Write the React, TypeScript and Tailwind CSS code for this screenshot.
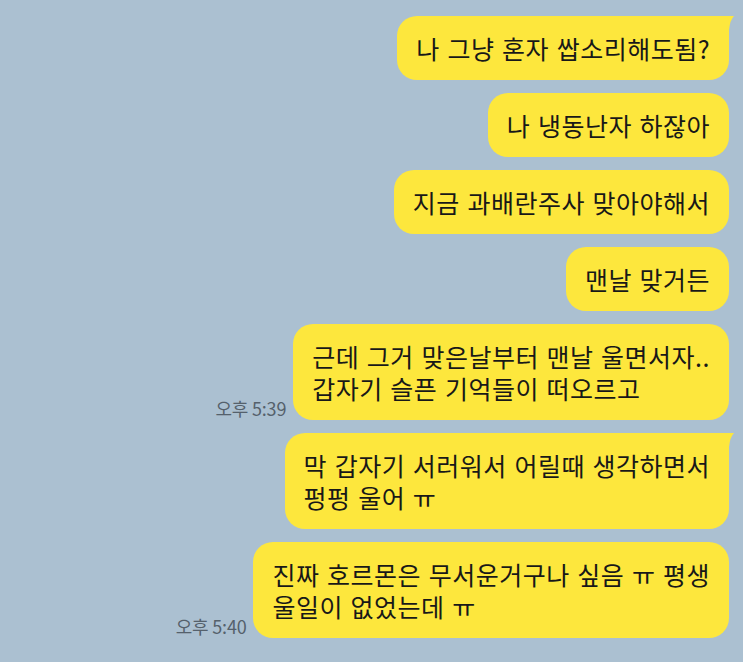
import React from "react";

const FONT = '"Noto Sans CJK KR", "Noto Sans", sans-serif';

function Tail() {
  return (
    <svg
      className="absolute right-[-5px] top-0"
      width="16"
      height="16"
      viewBox="0 0 16 16"
    >
      <path d="M0 0 L16 0 Q12 4 11 14 L0 14 Z" fill="#fde73d" />
    </svg>
  );
}

function Bubble({
  lines,
  tail,
  time,
}: {
  lines: string[];
  tail?: boolean;
  time?: string;
}) {
  return (
    <div className="flex items-end justify-end gap-[7px]">
      {time && (
        <span className="text-[18px] leading-[22px] text-[#55616c] pb-[1px] whitespace-nowrap tracking-[-0.2px]">
          {time}
        </span>
      )}
      <div className="relative">
        {tail && <Tail />}
        <div
          className={`relative bg-[#fde73d] rounded-[20px] ${tail ? "rounded-tr-[6px]" : ""} pl-[19px] pr-[19px] py-[16px] text-[25px] leading-[32px] text-[#181818] tracking-[0.5px] [word-spacing:1.5px] whitespace-nowrap`}
        >
          {lines.map((l, i) => (
            <React.Fragment key={i}>
              {i > 0 && <br />}
              {l}
            </React.Fragment>
          ))}
        </div>
      </div>
    </div>
  );
}

export default function App() {
  return (
    <div
      className="w-[743px] h-[662px] bg-[#abc0d1] overflow-hidden flex flex-col items-end gap-[13px] pt-[16px] pr-[14px]"
      style={{ fontFamily: FONT }}
    >
      <Bubble tail lines={["나 그냥 혼자 쌉소리해도됨?"]} />
      <Bubble lines={["나 냉동난자 하잖아"]} />
      <Bubble lines={["지금 과배란주사 맞아야해서"]} />
      <Bubble lines={["맨날 맞거든"]} />
      <Bubble
        time="오후 5:39"
        lines={["근데 그거 맞은날부터 맨날 울면서자..", "갑자기 슬픈 기억들이 떠오르고"]}
      />
      <Bubble
        tail
        lines={["막 갑자기 서러워서 어릴때 생각하면서", "펑펑 울어 ㅠ"]}
      />
      <Bubble
        time="오후 5:40"
        lines={["진짜 호르몬은 무서운거구나 싶음 ㅠ 평생", "울일이 없었는데 ㅠ"]}
      />
    </div>
  );
}
